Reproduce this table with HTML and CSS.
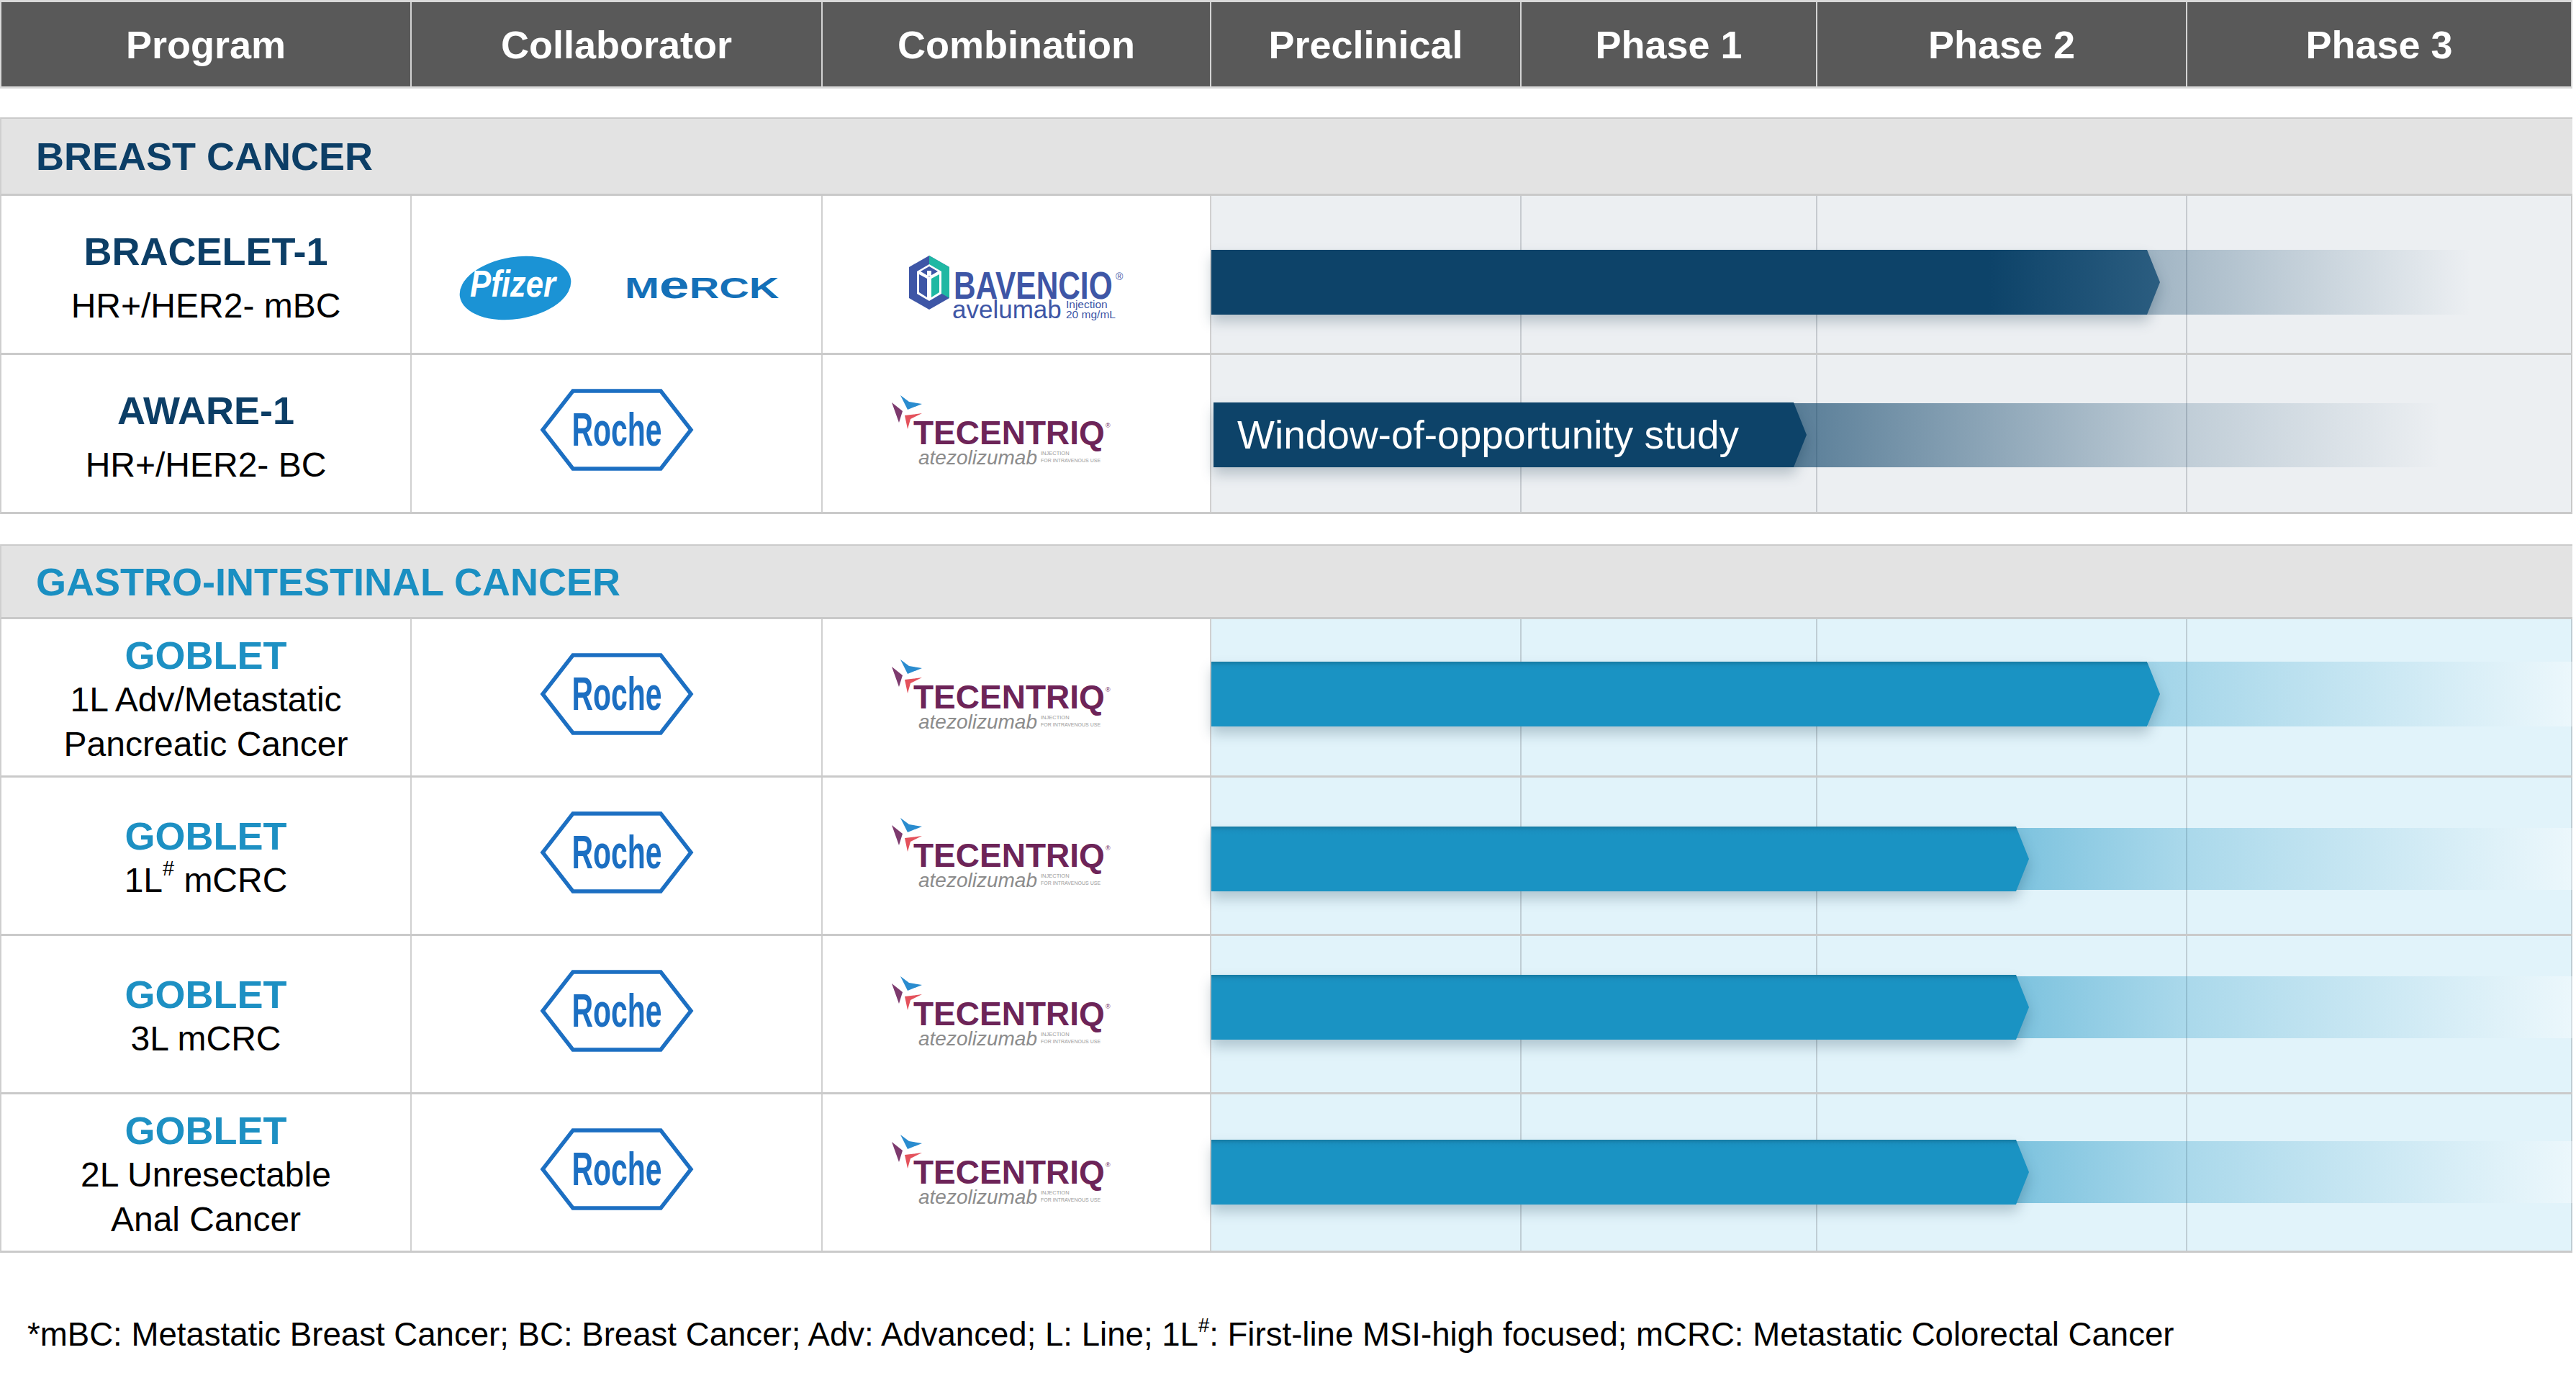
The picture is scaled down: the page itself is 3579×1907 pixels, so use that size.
FILE: index.html
```html
<!DOCTYPE html>
<html lang="en">
<head>
<meta charset="utf-8">
<title>Pipeline</title>
<link rel="stylesheet" href="styles.css">
</head>
<body>
<div class="page">
  <div class="cols head">
    <div class="hcell">Program</div>
    <div class="hcell">Collaborator</div>
    <div class="hcell">Combination</div>
    <div class="hcell">Preclinical</div>
    <div class="hcell">Phase 1</div>
    <div class="hcell">Phase 2</div>
    <div class="hcell">Phase 3</div>
  </div>

  <section class="group breast">
    <div class="band">BREAST CANCER</div>

    <div class="cols row r-b1">
      <div class="cell prog"><div class="pname">BRACELET-1</div><div class="pdesc">HR+/HER2- mBC</div></div>
      <div class="cell logos duo">
        <svg class="pfizer" width="160" height="92" viewBox="0 0 160 92">
          <ellipse cx="80" cy="46" rx="78" ry="43" transform="rotate(-9 80 46)" fill="#1b93d5"/>
          <text transform="translate(17 58) scale(0.84 1)" font-family="Liberation Sans, sans-serif" font-style="italic" font-weight="bold" font-size="52" fill="#ffffff">Pfizer</text>
        </svg>
        <svg class="merck" width="216" height="48" viewBox="0 0 216 48">
          <text transform="translate(0 38) scale(1.44 1)" font-family="Liberation Sans, sans-serif" font-weight="bold" font-size="40" fill="#1470b8">M<tspan font-size="52">e</tspan>RCK</text>
        </svg>
      </div>
      <div class="cell logos">
        <svg class="bavencio" width="306" height="96" viewBox="0 0 306 96">
          <polygon points="32,3 60,19 60,62 32,78 4,62 4,19" fill="#3e56a6"/>
          <polygon points="32,3 60,19 60,62 48,55 48,26 32,16" fill="#1fb8a3"/>
          <polygon points="32,15 49,25 49,56 32,66 15,56 15,25" fill="#ffffff"/>
          <polygon points="18,29 29,35 29,61 18,54" fill="#3e56a6"/>
          <polygon points="35,35 46,29 46,54 35,61" fill="#1fb8a3"/>
          <polygon points="20,25 32,18 44,25 32,32" fill="#3e56a6"/>
          <polygon points="29,24 35,24 35,31 29,31" fill="#ffffff"/>
          <text transform="translate(66 63) scale(0.8 1)" font-family="Liberation Sans, sans-serif" font-weight="bold" font-size="53" fill="#3e56a6">BAVENCIO</text>
          <text x="291" y="37" font-family="Liberation Sans, sans-serif" font-size="14" fill="#3e56a6">®</text>
          <text x="64" y="90" font-family="Liberation Sans, sans-serif" font-size="35" fill="#3e56a6">avelumab</text>
          <text x="222" y="76" font-family="Liberation Sans, sans-serif" font-size="15.5" fill="#3e56a6">Injection</text>
          <text x="222" y="90" font-family="Liberation Sans, sans-serif" font-size="15.5" fill="#3e56a6">20 mg/mL</text>
        </svg>
      </div>
      <div class="track grey">
        <div class="stage"></div><div class="stage"></div><div class="stage"></div><div class="stage"></div>
        <div class="fade fade-b1" style="width:450px"></div>
        <div class="barwrap top-b1" style="width:1318px"><div class="bar navy-grad"></div></div>
      </div>
    </div>

    <div class="cols row r-b2">
      <div class="cell prog"><div class="pname">AWARE-1</div><div class="pdesc">HR+/HER2- BC</div></div>
      <div class="cell logos">
        <svg class="roche" width="214" height="114" viewBox="0 0 214 114">
          <polygon points="46,3 168,3 210,57 168,111 46,111 4,57" fill="none" stroke="#1c6fc2" stroke-width="5.5"/>
          <text transform="translate(107 79) scale(0.64 1)" text-anchor="middle" font-family="Liberation Sans, sans-serif" font-weight="bold" font-size="64" fill="#1c6fc2">Roche</text>
        </svg>
      </div>
      <div class="cell logos">
        <svg class="tecentriq" width="306" height="106" viewBox="0 0 306 106">
          <polygon points="14,5 26,14 44,17 24,25" fill="#2a8ccf"/>
          <polygon points="2,15 17,27 12,43" fill="#7d3a6e"/>
          <polygon points="44,30 20,33 24,52 28,38" fill="#e4525c"/>
          <text x="32" y="73" font-family="Liberation Sans, sans-serif" font-weight="bold" font-size="46" fill="#6d2458">TECENTRIQ</text>
          <text x="299" y="50" font-family="Liberation Sans, sans-serif" font-size="9" fill="#6d2458">®</text>
          <text x="39" y="101" font-family="Liberation Sans, sans-serif" font-style="italic" font-size="28" fill="#8c8c8c">atezolizumab</text>
          <text x="209" y="88" font-family="Liberation Sans, sans-serif" font-size="7.5" fill="#9a9a9a">INJECTION</text>
          <text x="209" y="98" font-family="Liberation Sans, sans-serif" font-size="7" fill="#9a9a9a">FOR INTRAVENOUS USE</text>
        </svg>
      </div>
      <div class="track grey">
        <div class="stage"></div><div class="stage"></div><div class="stage"></div><div class="stage"></div>
        <div class="fade fade-b2" style="width:900px"></div>
        <div class="barwrap top-b2" style="width:824px"><div class="bar navy">Window-of-opportunity study</div></div>
      </div>
    </div>
  </section>

  <section class="group gi">
    <div class="band">GASTRO-INTESTINAL CANCER</div>

    <div class="cols row">
      <div class="cell prog"><div class="pname">GOBLET</div><div class="pdesc">1L Adv/Metastatic</div><div class="pdesc">Pancreatic Cancer</div></div>
      <div class="cell logos">
        <svg class="roche" width="214" height="114" viewBox="0 0 214 114">
          <polygon points="46,3 168,3 210,57 168,111 46,111 4,57" fill="none" stroke="#1c6fc2" stroke-width="5.5"/>
          <text transform="translate(107 79) scale(0.64 1)" text-anchor="middle" font-family="Liberation Sans, sans-serif" font-weight="bold" font-size="64" fill="#1c6fc2">Roche</text>
        </svg>
      </div>
      <div class="cell logos">
        <svg class="tecentriq" width="306" height="106" viewBox="0 0 306 106">
          <polygon points="14,5 26,14 44,17 24,25" fill="#2a8ccf"/>
          <polygon points="2,15 17,27 12,43" fill="#7d3a6e"/>
          <polygon points="44,30 20,33 24,52 28,38" fill="#e4525c"/>
          <text x="32" y="73" font-family="Liberation Sans, sans-serif" font-weight="bold" font-size="46" fill="#6d2458">TECENTRIQ</text>
          <text x="299" y="50" font-family="Liberation Sans, sans-serif" font-size="9" fill="#6d2458">®</text>
          <text x="39" y="101" font-family="Liberation Sans, sans-serif" font-style="italic" font-size="28" fill="#8c8c8c">atezolizumab</text>
          <text x="209" y="88" font-family="Liberation Sans, sans-serif" font-size="7.5" fill="#9a9a9a">INJECTION</text>
          <text x="209" y="98" font-family="Liberation Sans, sans-serif" font-size="7" fill="#9a9a9a">FOR INTRAVENOUS USE</text>
        </svg>
      </div>
      <div class="track blue">
        <div class="stage"></div><div class="stage"></div><div class="stage"></div><div class="stage"></div>
        <div class="fade fade-g1" style="width:590px"></div>
        <div class="barwrap top-g1" style="width:1318px"><div class="bar cyan"></div></div>
      </div>
    </div>

    <div class="cols row">
      <div class="cell prog"><div class="pname">GOBLET</div><div class="pdesc">1L<sup>#</sup> mCRC</div></div>
      <div class="cell logos">
        <svg class="roche" width="214" height="114" viewBox="0 0 214 114">
          <polygon points="46,3 168,3 210,57 168,111 46,111 4,57" fill="none" stroke="#1c6fc2" stroke-width="5.5"/>
          <text transform="translate(107 79) scale(0.64 1)" text-anchor="middle" font-family="Liberation Sans, sans-serif" font-weight="bold" font-size="64" fill="#1c6fc2">Roche</text>
        </svg>
      </div>
      <div class="cell logos">
        <svg class="tecentriq" width="306" height="106" viewBox="0 0 306 106">
          <polygon points="14,5 26,14 44,17 24,25" fill="#2a8ccf"/>
          <polygon points="2,15 17,27 12,43" fill="#7d3a6e"/>
          <polygon points="44,30 20,33 24,52 28,38" fill="#e4525c"/>
          <text x="32" y="73" font-family="Liberation Sans, sans-serif" font-weight="bold" font-size="46" fill="#6d2458">TECENTRIQ</text>
          <text x="299" y="50" font-family="Liberation Sans, sans-serif" font-size="9" fill="#6d2458">®</text>
          <text x="39" y="101" font-family="Liberation Sans, sans-serif" font-style="italic" font-size="28" fill="#8c8c8c">atezolizumab</text>
          <text x="209" y="88" font-family="Liberation Sans, sans-serif" font-size="7.5" fill="#9a9a9a">INJECTION</text>
          <text x="209" y="98" font-family="Liberation Sans, sans-serif" font-size="7" fill="#9a9a9a">FOR INTRAVENOUS USE</text>
        </svg>
      </div>
      <div class="track blue">
        <div class="stage"></div><div class="stage"></div><div class="stage"></div><div class="stage"></div>
        <div class="fade fade-g2 ftop-g2" style="width:773px"></div>
        <div class="barwrap top-g2" style="width:1136px"><div class="bar cyan"></div></div>
      </div>
    </div>

    <div class="cols row">
      <div class="cell prog"><div class="pname">GOBLET</div><div class="pdesc">3L mCRC</div></div>
      <div class="cell logos">
        <svg class="roche" width="214" height="114" viewBox="0 0 214 114">
          <polygon points="46,3 168,3 210,57 168,111 46,111 4,57" fill="none" stroke="#1c6fc2" stroke-width="5.5"/>
          <text transform="translate(107 79) scale(0.64 1)" text-anchor="middle" font-family="Liberation Sans, sans-serif" font-weight="bold" font-size="64" fill="#1c6fc2">Roche</text>
        </svg>
      </div>
      <div class="cell logos">
        <svg class="tecentriq" width="306" height="106" viewBox="0 0 306 106">
          <polygon points="14,5 26,14 44,17 24,25" fill="#2a8ccf"/>
          <polygon points="2,15 17,27 12,43" fill="#7d3a6e"/>
          <polygon points="44,30 20,33 24,52 28,38" fill="#e4525c"/>
          <text x="32" y="73" font-family="Liberation Sans, sans-serif" font-weight="bold" font-size="46" fill="#6d2458">TECENTRIQ</text>
          <text x="299" y="50" font-family="Liberation Sans, sans-serif" font-size="9" fill="#6d2458">®</text>
          <text x="39" y="101" font-family="Liberation Sans, sans-serif" font-style="italic" font-size="28" fill="#8c8c8c">atezolizumab</text>
          <text x="209" y="88" font-family="Liberation Sans, sans-serif" font-size="7.5" fill="#9a9a9a">INJECTION</text>
          <text x="209" y="98" font-family="Liberation Sans, sans-serif" font-size="7" fill="#9a9a9a">FOR INTRAVENOUS USE</text>
        </svg>
      </div>
      <div class="track blue">
        <div class="stage"></div><div class="stage"></div><div class="stage"></div><div class="stage"></div>
        <div class="fade fade-g2 ftop-g3" style="width:773px"></div>
        <div class="barwrap top-g3" style="width:1136px"><div class="bar cyan"></div></div>
      </div>
    </div>

    <div class="cols row">
      <div class="cell prog"><div class="pname">GOBLET</div><div class="pdesc">2L Unresectable</div><div class="pdesc">Anal Cancer</div></div>
      <div class="cell logos">
        <svg class="roche" width="214" height="114" viewBox="0 0 214 114">
          <polygon points="46,3 168,3 210,57 168,111 46,111 4,57" fill="none" stroke="#1c6fc2" stroke-width="5.5"/>
          <text transform="translate(107 79) scale(0.64 1)" text-anchor="middle" font-family="Liberation Sans, sans-serif" font-weight="bold" font-size="64" fill="#1c6fc2">Roche</text>
        </svg>
      </div>
      <div class="cell logos">
        <svg class="tecentriq" width="306" height="106" viewBox="0 0 306 106">
          <polygon points="14,5 26,14 44,17 24,25" fill="#2a8ccf"/>
          <polygon points="2,15 17,27 12,43" fill="#7d3a6e"/>
          <polygon points="44,30 20,33 24,52 28,38" fill="#e4525c"/>
          <text x="32" y="73" font-family="Liberation Sans, sans-serif" font-weight="bold" font-size="46" fill="#6d2458">TECENTRIQ</text>
          <text x="299" y="50" font-family="Liberation Sans, sans-serif" font-size="9" fill="#6d2458">®</text>
          <text x="39" y="101" font-family="Liberation Sans, sans-serif" font-style="italic" font-size="28" fill="#8c8c8c">atezolizumab</text>
          <text x="209" y="88" font-family="Liberation Sans, sans-serif" font-size="7.5" fill="#9a9a9a">INJECTION</text>
          <text x="209" y="98" font-family="Liberation Sans, sans-serif" font-size="7" fill="#9a9a9a">FOR INTRAVENOUS USE</text>
        </svg>
      </div>
      <div class="track blue">
        <div class="stage"></div><div class="stage"></div><div class="stage"></div><div class="stage"></div>
        <div class="fade fade-g2 ftop-g4" style="width:773px"></div>
        <div class="barwrap top-g4" style="width:1136px"><div class="bar cyan"></div></div>
      </div>
    </div>
  </section>

  <p class="note">*mBC: Metastatic Breast Cancer; BC: Breast Cancer; Adv: Advanced; L: Line; 1L<sup>#</sup>: First-line MSI-high focused; mCRC: Metastatic Colorectal Cancer</p>
</div>
</body>
</html>
```

FILE: styles.css
```css
* { box-sizing: border-box; }
html, body { margin: 0; padding: 0; background: #ffffff; }
body { font-family: "Liberation Sans", Arial, sans-serif; color: #000; }

.page { width: 3579px; }

.cols {
  display: grid;
  grid-template-columns: 570px 571px 540px 431px 411px 514px 535px;
  width: 3574px;
}

/* header */
.head {
  height: 123px;
  border-top: 3px solid #d9d9d9;
  border-bottom: 3px solid #d9d9d9;
  border-left: 2px solid #d9d9d9;
}
.hcell {
  background: #595959;
  color: #ffffff;
  font-weight: 700;
  font-size: 54px;
  display: flex;
  align-items: center;
  justify-content: center;
  border-right: 2px solid #d4d4d4;
}

/* groups and bands */
.group { margin-top: 40px; }
.group.gi { margin-top: 42px; }
.band {
  width: 3574px;
  height: 109px;
  background: #e3e3e3;
  border-top: 2px solid #cbcbcb;
  border-bottom: 3px solid #c9c9c9;
  border-left: 2px solid #cfcfcf;
  display: flex;
  align-items: center;
  padding-left: 48px;
  font-size: 54px;
  font-weight: 700;
}
.breast .band { color: #0c3e66; }
.gi .band { height: 104px; color: #1a8fc2; }

/* rows */
.row {
  height: 221px;
  border-bottom: 3px solid #cacaca;
  border-left: 2px solid #cfcfcf;
}
.gi .row { height: 220px; }

.cell {
  border-right: 2px solid #d0d0d0;
  background: #ffffff;
  display: flex;
  flex-direction: column;
  align-items: center;
  justify-content: center;
}
.prog { text-align: center; }
.pname { font-weight: 700; font-size: 54px; }
.pdesc { font-size: 48px; }
.breast .prog { padding-top: 12px; }
.breast .pname { color: #0c3e66; line-height: 76px; }
.breast .pdesc { line-height: 76px; }
.gi .prog { padding-top: 6px; }
.gi .pname { color: #1d90c3; line-height: 62px; }
.gi .pdesc { line-height: 62px; }
.pdesc sup { font-size: 0.6em; line-height: 0; vertical-align: 0.8em; }

.logos { padding-bottom: 10px; }
.logos.duo { flex-direction: row; gap: 72px; padding-left: 6px; }
.r-b1 .logos { padding-top: 38px; padding-bottom: 0; }
.tecentriq { margin-right: 44px; }
svg { display: block; overflow: visible; }

/* pipeline track */
.track {
  grid-column: 4 / 8;
  display: grid;
  grid-template-columns: 431px 411px 514px 535px;
  grid-template-rows: 100%;
}
.track.grey { background: #eceff2; }
.track.blue { background: #e1f3fa; }
.stage { grid-row: 1; border-right: 2px solid #c6cacf; }
.track.blue .stage { border-right-color: #bfcdd4; }
.stage:nth-child(1) { grid-column: 1; }
.stage:nth-child(2) { grid-column: 2; }
.stage:nth-child(3) { grid-column: 3; }
.stage:nth-child(4) { grid-column: 4; border-right-color: #c8c8c8; }

.fade, .barwrap {
  grid-row: 1;
  grid-column: 1 / -1;
  align-self: start;
  justify-self: start;
  height: 90px;
}
.barwrap { filter: drop-shadow(0 10px 9px rgba(0, 35, 60, 0.22)); }
.bar {
  height: 100%;
  clip-path: polygon(0 0, calc(100% - 18px) 0, 100% 50%, calc(100% - 18px) 100%, 0 100%);
}
.navy { background: #0d4369; color: #ffffff; font-size: 55px; display: flex; align-items: center; padding-left: 33px; white-space: nowrap; }
.navy-grad { background: linear-gradient(to right, #0d4369 0%, #0d4369 82%, #2b5d80 100%); }
.cyan { background: linear-gradient(to bottom, #167aa2 0px, #1a8fbf 6px, #1a93c3 12px); }

.top-b1 { margin-top: 75px; }
.top-b2 { margin-top: 66px; margin-left: 3px; }
.top-g1 { margin-top: 59px; }
.top-g2 { margin-top: 68px; }
.top-g3 { margin-top: 54px; }
.top-g4 { margin-top: 63px; }

.fade-b1 { margin-top: 75px; margin-left: 1300px; background: linear-gradient(to right, rgba(13, 67, 105, 0.34), rgba(13, 67, 105, 0)); }
.fade-b2 { margin-top: 67px; margin-left: 808px; height: 89px; background: linear-gradient(to right, rgba(13, 67, 105, 0.66) 0%, rgba(13, 67, 105, 0.2) 60%, rgba(13, 67, 105, 0) 100%); }
.fade-g1 { margin-top: 59px; margin-left: 1301px; background: linear-gradient(to right, rgba(26, 147, 195, 0.32), rgba(255, 255, 255, 0.35)); }
.fade-g2 { margin-left: 1118px; height: 86px; background: linear-gradient(to right, rgba(26, 147, 195, 0.5) 0%, rgba(26, 147, 195, 0.28) 30%, rgba(255, 255, 255, 0.35) 100%); }
.ftop-g2 { margin-top: 70px; }
.ftop-g3 { margin-top: 56px; }
.ftop-g4 { margin-top: 65px; }

/* footnote */
.note {
  margin: 88px 0 0 0;
  padding-left: 38px;
  font-size: 45.6px;
  line-height: 52px;
  white-space: nowrap;
}
.note sup { font-size: 0.6em; line-height: 0; vertical-align: 0.7em; }
```
